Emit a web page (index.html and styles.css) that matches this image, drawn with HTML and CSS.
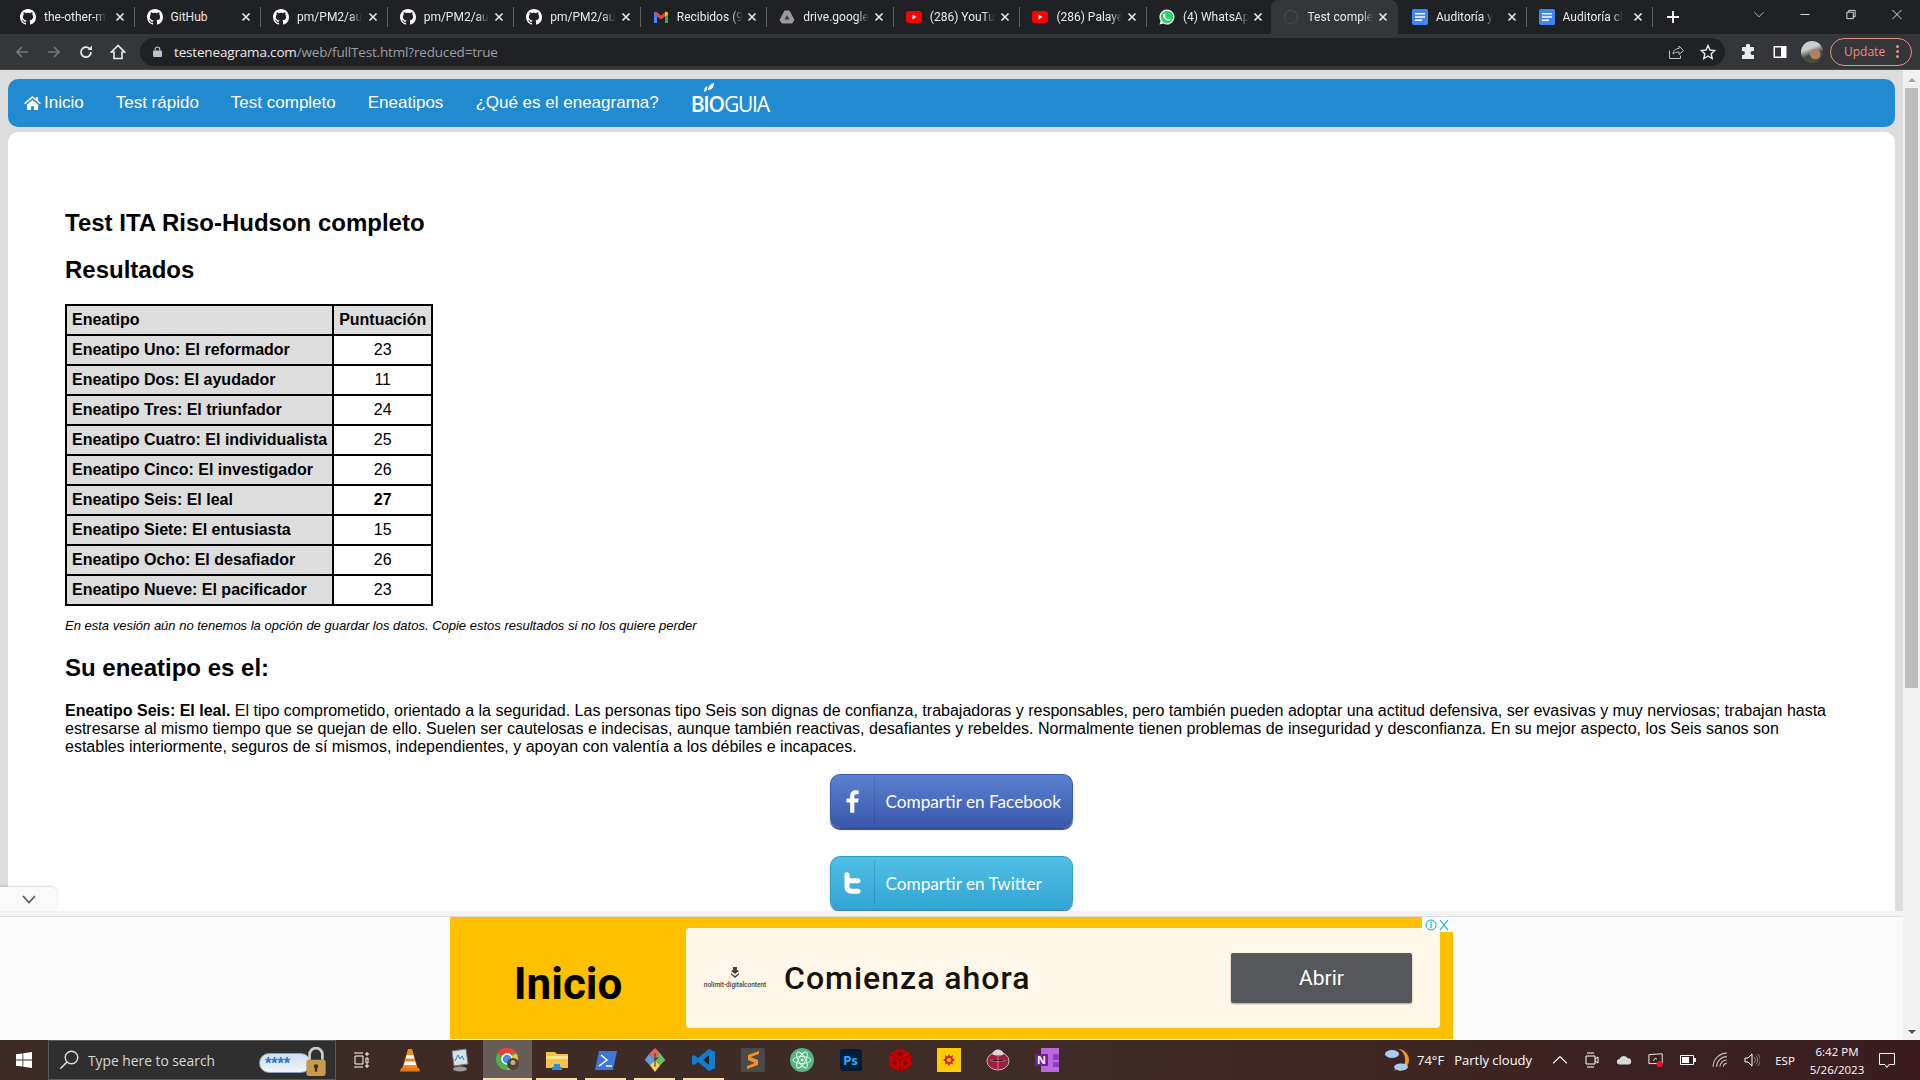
FILE: index.html
```html
<!DOCTYPE html>
<html lang="es">
<head>
<meta charset="utf-8">
<title>Test completo</title>
<link rel="stylesheet" href="styles.css">
</head>
<body>
<svg class="defs" width="0" height="0">
  <symbol id="gh" viewBox="0 0 16 16"><path fill="#fff" d="M8 0C3.58 0 0 3.58 0 8c0 3.54 2.29 6.53 5.47 7.59.4.07.55-.17.55-.38 0-.19-.01-.82-.01-1.49-2.01.37-2.53-.49-2.69-.94-.09-.23-.48-.94-.82-1.13-.28-.15-.68-.52-.01-.53.63-.01 1.08.58 1.23.82.72 1.21 1.87.87 2.33.66.07-.52.28-.87.51-1.07-1.78-.2-3.64-.89-3.64-3.95 0-.87.31-1.59.82-2.15-.08-.2-.36-1.02.08-2.12 0 0 .67-.21 2.2.82.64-.18 1.32-.27 2-.27.68 0 1.36.09 2 .27 1.53-1.04 2.2-.82 2.2-.82.44 1.1.16 1.92.08 2.12.51.56.82 1.27.82 2.15 0 3.07-1.87 3.75-3.65 3.95.29.25.54.73.54 1.48 0 1.07-.01 1.93-.01 2.2 0 .21.15.46.55.38A8.013 8.013 0 0016 8c0-4.42-3.58-8-8-8z"/></symbol>
  <symbol id="x" viewBox="0 0 10 10"><path d="M1.5 1.5l7 7M8.500 1.500l-7 7" stroke="#e8eaed" stroke-width="1.6" fill="none"/></symbol>
  <symbol id="yt" viewBox="0 0 16 16"><rect y="2" width="16" height="12" rx="3" fill="#f00"/><path d="M6.500 5.500l4 2.500-4 2.500z" fill="#fff"/></symbol>
  <symbol id="doc" viewBox="0 0 16 16"><rect width="16" height="16" rx="2" fill="#4285f4"/><path d="M3 4h10v1.600H3zM3 7.200h10v1.600H3zM3 10.400h7V12H3z" fill="#fff"/></symbol>
</svg>

<header class="tabstrip">
  <div class="tab"><svg class="fav"><use href="#gh"/></svg><span class="tab-label">the-other-m</span><svg class="tab-x"><use href="#x"/></svg></div>
  <div class="tab"><svg class="fav"><use href="#gh"/></svg><span class="tab-label tab-label-full">GitHub</span><svg class="tab-x"><use href="#x"/></svg></div>
  <div class="tab"><svg class="fav"><use href="#gh"/></svg><span class="tab-label">pm/PM2/au</span><svg class="tab-x"><use href="#x"/></svg></div>
  <div class="tab"><svg class="fav"><use href="#gh"/></svg><span class="tab-label">pm/PM2/au</span><svg class="tab-x"><use href="#x"/></svg></div>
  <div class="tab"><svg class="fav"><use href="#gh"/></svg><span class="tab-label">pm/PM2/au</span><svg class="tab-x"><use href="#x"/></svg></div>
  <div class="tab"><svg class="fav" viewBox="0 0 16 16"><path d="M1 3.500V14h3V7.500l4 3 4-3V14h3V3.500l-2-1-5 4-5-4z" fill="#ea4335"/><path d="M1 3.500V14h3V6z" fill="#4285f4"/><path d="M12 6v8h3V3.500z" fill="#34a853"/><path d="M12 2.500l3 1V6l-3 1.500z" fill="#fbbc04"/></svg><span class="tab-label">Recibidos (9</span><svg class="tab-x"><use href="#x"/></svg></div>
  <div class="tab"><svg class="fav" viewBox="0 0 16 16"><path d="M5.500 1.500h5L15.500 11l-2.500 3.500H3L.5 11z" fill="#9a9a9a"/><path d="M8 6l2.500 4.500h-5z" fill="#3a3b3e"/></svg><span class="tab-label">drive.google</span><svg class="tab-x"><use href="#x"/></svg></div>
  <div class="tab"><svg class="fav"><use href="#yt"/></svg><span class="tab-label">(286) YouTu</span><svg class="tab-x"><use href="#x"/></svg></div>
  <div class="tab"><svg class="fav"><use href="#yt"/></svg><span class="tab-label">(286) Palaye</span><svg class="tab-x"><use href="#x"/></svg></div>
  <div class="tab"><svg class="fav" viewBox="0 0 16 16"><path d="M8 .5a7.500 7.500 0 00-6.400 11.400L.5 15.500l3.700-1A7.500 7.500 0 108 .5z" fill="#fff"/><circle cx="8" cy="8" r="6.300" fill="#25d366"/><path d="M5.500 4.500c1 0 1 2 .6 2.500-.3.500.8 2.500 3 3.200.6-.7 1-.9 1.500-.6l1 .8c0 1.200-1.500 2-3 1.500C6 11 4 8.500 4 6.500c0-1 .7-2 1.500-2z" fill="#fff"/></svg><span class="tab-label">(4) WhatsAp</span><svg class="tab-x"><use href="#x"/></svg></div>
  <div class="tab tab-active"><svg class="fav" viewBox="0 0 16 16"><circle cx="8" cy="8" r="6.500" fill="none" stroke="#4a4b50" stroke-width="1.500" stroke-dasharray="2 1"/></svg><span class="tab-label">Test comple</span><svg class="tab-x"><use href="#x"/></svg></div>
  <div class="tab"><svg class="fav"><use href="#doc"/></svg><span class="tab-label">Auditoría y</span><svg class="tab-x"><use href="#x"/></svg></div>
  <div class="tab"><svg class="fav"><use href="#doc"/></svg><span class="tab-label">Auditoría cl</span><svg class="tab-x"><use href="#x"/></svg></div>
  <svg class="newtab" viewBox="0 0 12 12"><path d="M6 0v12M0 6h12" stroke="#fff" stroke-width="1.800"/></svg>
  <div class="winctl">
    <svg viewBox="0 0 12 12"><path d="M1 3.500l5 5 5-5" stroke="#bdc1c6" fill="none"/></svg>
    <svg viewBox="0 0 12 12"><path d="M1 6h10" stroke="#e8eaed"/></svg>
    <svg viewBox="0 0 12 12"><path d="M1.500 3.500h7v7h-7zM3.500 3.500v-2h7v7h-2" stroke="#e8eaed" fill="none"/></svg>
    <svg viewBox="0 0 12 12"><path d="M1 1l10 10M11 1L1 11" stroke="#e8eaed" fill="none"/></svg>
  </div>
</header>

<div class="toolbar">
  <svg class="tb-ic" viewBox="0 0 16 16"><path d="M14 8H3M8 3L3 8l5 5" stroke="#75777b" stroke-width="1.700" fill="none"/></svg>
  <svg class="tb-ic" viewBox="0 0 16 16"><path d="M2 8h11M8 3l5 5-5 5" stroke="#75777b" stroke-width="1.700" fill="none"/></svg>
  <svg class="tb-ic" viewBox="0 0 16 16"><path d="M13 8a5 5 0 11-1.500-3.500" stroke="#e8eaed" stroke-width="1.700" fill="none"/><path d="M14 1.500V6H9.500z" fill="#e8eaed"/></svg>
  <svg class="tb-ic tb-ic-last" viewBox="0 0 16 16"><path d="M8 1.500L1.500 8H4v6.500h8V8h2.500z" stroke="#e8eaed" stroke-width="1.600" fill="none"/></svg>
  <div class="omnibox">
    <svg class="lock" viewBox="0 0 10 12"><rect y="5" width="10" height="7" rx="1" fill="#bdc1c6"/><path d="M2.500 5V3.500a2.500 2.500 0 015 0V5" stroke="#bdc1c6" stroke-width="1.300" fill="none"/></svg>
    <span class="url"><span class="url-host">testeneagrama.com</span>/web/fullTest.html?reduced=true</span>
    <svg class="omni-ic" viewBox="0 0 16 16"><path d="M1.500 6.500v8h11v-3M5 10c0-3.500 3-5.500 6-5.500V2l4.500 4.500L11 10.500V8c-2.500 0-4.500.5-6 2z" stroke="#bdc1c6" fill="none"/></svg>
    <svg class="omni-ic omni-star" viewBox="0 0 16 16"><path d="M8 1.500l2 4.500 4.800.5-3.600 3.200 1 4.800L8 12l-4.200 2.500 1-4.800L1.200 6.500 6 6z" stroke="#e8eaed" stroke-width="1.400" fill="none"/></svg>
  </div>
  <div class="tb-right">
    <svg class="tb-r-ic" viewBox="0 0 16 16"><path d="M6 1.500a2 2 0 014 0V3h4v4h-1.500a2 2 0 000 4H14v4H2v-4h1a2 2 0 000-4H2V3h4z" fill="#e8eaed"/></svg>
    <svg class="tb-r-ic tb-r-side" viewBox="0 0 16 16"><path d="M1.500 2h13v12h-13z" fill="#fff"/><path d="M3 3.500h6v9H3z" fill="#35363a"/></svg>
    <span class="avatar"></span>
    <div class="update"><span>Update</span><span class="dots"><i></i><i></i><i></i></span></div>
  </div>
</div>

<div class="viewport">
  <main class="page">
    <nav class="nav">
      <a class="nav-item"><svg class="home" viewBox="0 0 18 15"><path d="M9 0L0 7.500l1 1.300L9 2.200l8 6.600 1-1.300-3-2.500V1h-2.500v2.300zM3 9.200V15h4.500v-4h3v4H15V9.200L9 4.200z" fill="#fff"/></svg> Inicio</a>
      <a class="nav-item">Test rápido</a>
      <a class="nav-item">Test completo</a>
      <a class="nav-item">Eneatipos</a>
      <a class="nav-item">¿Qué es el eneagrama?</a>
      <a class="nav-item brand"><svg class="leaves" viewBox="0 0 10 9"><path d="M0 9c0-3 1-5 3-6 1 2 0 5-3 6zM4 7c0-3 2-6 6-7 0 4-2 7-6 7z" fill="#fff"/></svg><b>BIO</b>GUIA</a>
    </nav>
    <section class="panel">
      <h1 class="title t1">Test ITA Riso-Hudson completo</h1>
      <h2 class="title t2">Resultados</h2>
      <table class="results">
        <tr><th>Eneatipo</th><th class="score-h">Puntuación</th></tr>
        <tr><th>Eneatipo Uno: El reformador</th><td>23</td></tr>
        <tr><th>Eneatipo Dos: El ayudador</th><td>11</td></tr>
        <tr><th>Eneatipo Tres: El triunfador</th><td>24</td></tr>
        <tr><th>Eneatipo Cuatro: El individualista</th><td>25</td></tr>
        <tr><th>Eneatipo Cinco: El investigador</th><td>26</td></tr>
        <tr><th>Eneatipo Seis: El leal</th><td class="top">27</td></tr>
        <tr><th>Eneatipo Siete: El entusiasta</th><td>15</td></tr>
        <tr><th>Eneatipo Ocho: El desafiador</th><td>26</td></tr>
        <tr><th>Eneatipo Nueve: El pacificador</th><td>23</td></tr>
      </table>
      <p class="note">En esta vesión aún no tenemos la opción de guardar los datos. Copie estos resultados si no los quiere perder</p>
      <h3 class="title t3">Su eneatipo es el:</h3>
      <p class="desc"><b>Eneatipo Seis: El leal.</b> El tipo comprometido, orientado a la seguridad. Las personas tipo Seis son dignas de confianza, trabajadoras y responsables, pero también pueden adoptar una actitud defensiva, ser evasivas y muy nerviosas; trabajan hasta estresarse al mismo tiempo que se quejan de ello. Suelen ser cautelosas e indecisas, aunque también reactivas, desafiantes y rebeldes. Normalmente tienen problemas de inseguridad y desconfianza. En su mejor aspecto, los Seis sanos son estables interiormente, seguros de sí mismos, independientes, y apoyan con valentía a los débiles e incapaces.</p>
      <div class="shares">
        <a class="share fb"><span class="share-ic"><svg viewBox="0 0 14 24"><path d="M9 24V13h4l.6-4.300H9V6.200C9 5 9.400 4.200 11 4.200h2.600V.3C13 .2 12 0 10.500 0 7 0 4.500 2.200 4.500 6v2.700H.5V13h4v11z" fill="#fff"/></svg></span><span class="share-t">Compartir en Facebook</span></a>
        <a class="share tw"><span class="share-ic"><svg viewBox="0 0 18 24"><path d="M3 3v13c0 3 2 5 5 5h7M3 9.500h12" stroke="#fff" stroke-width="5.500" stroke-linecap="round" fill="none"/></svg></span><span class="share-t">Compartir en Twitter</span></a>
      </div>
    </section>
    <aside class="anchor">
      <div class="anchor-tab"><svg viewBox="0 0 14 9"><path d="M1 1l6 6.500L13 1" stroke="#555" stroke-width="1.600" fill="none"/></svg></div>
      <div class="ad">
        <div class="ad-left">Inicio</div>
        <div class="ad-card">
          <div class="ad-logo"><svg viewBox="0 0 10 12"><path d="M3 0h4v3l2 1-4 3-4-3 2-1zM1 6l4 3 4-3v1.500L5 11 1 7.500z" fill="#444"/></svg><span>nolimit-digitalcontent</span></div>
          <div class="ad-head">Comienza ahora</div>
          <div class="ad-btn">Abrir</div>
        </div>
        <div class="ad-choice"><svg viewBox="0 0 12 12"><circle cx="6" cy="6" r="5" fill="none" stroke="#00aecd"/><path d="M6 5v4M6 3v1" stroke="#00aecd" stroke-width="1.200"/></svg><svg viewBox="0 0 12 12"><path d="M2 1l8 10M10 1L2 11" stroke="#00aecd" stroke-width="1.200"/></svg></div>
      </div>
    </aside>
  </main>
  <div class="scrollbar">
    <span class="arrow-up"></span>
    <span class="thumb"></span>
    <span class="arrow-down"></span>
  </div>
</div>

<footer class="taskbar">
  <div class="start"><svg viewBox="0 0 16 16"><path d="M0 2.300L6.500 1.400v6.200H0zM7.300 1.300L16 0v7.600H7.300zM0 8.400h6.500v6.200L0 13.700zM7.300 8.400H16V16l-8.700-1.300z" fill="#fff"/></svg></div>
  <div class="search">
    <svg class="search-ic" viewBox="0 0 16 16"><circle cx="10" cy="6" r="5" fill="none" stroke="#ddd" stroke-width="1.100"/><path d="M6.500 9.500L1 15" stroke="#ddd" stroke-width="1.200"/></svg>
    <span class="search-t">Type here to search</span>
    <span class="pw"><span>****</span></span>
    <svg class="padlock" viewBox="0 0 20 28"><path d="M4 12V7a6 6 0 0112 0v5" stroke="#c9ccd0" stroke-width="2.500" fill="none"/><rect x="1" y="12" width="18" height="15" rx="2" fill="#c99a4a"/><circle cx="10" cy="18" r="2" fill="#3a2a14"/><path d="M9 18h2v5H9z" fill="#3a2a14"/></svg>
  </div>
  <div class="apps">
    <div class="app app-task"><svg viewBox="0 0 16 16"><path d="M1 1h9M1 15h9M2 4h8v8H2zM13 1h2v2h-2zM13 6h2v5h-2zM13 13h2v2h-2z" stroke="#fff" fill="none"/></svg></div>
    <div class="app"><svg viewBox="0 0 20 24"><path d="M8 1h4l6 20H2z" fill="#f28a1d"/><path d="M6.800 7h6.400l1 3.500H5.800zM5 13.500h10l1 3.500H4z" fill="#fff"/><path d="M1 20h18l1 3.500H0z" fill="#e8780c"/></svg></div>
    <div class="app"><svg viewBox="0 0 24 24"><path d="M5 3l14-2 2 15-14 2z" fill="#d9dde0" stroke="#777"/><path d="M7 5l11-2 1 11-11 2z" fill="#cfe3f3"/><path d="M8 13l3-6 2 4 2-3 2 4" stroke="#3a77b5" fill="none"/><ellipse cx="13" cy="21" rx="7" ry="2.500" fill="#9a9a9a"/></svg></div>
    <div class="app app-chrome app-on"><svg viewBox="0 0 24 24"><circle cx="11" cy="11" r="11" fill="#4caf50"/><path d="M11 0a11 11 0 019.500 5.500H11a5.500 5.500 0 00-4.800 2.800L1.500 5A11 11 0 0111 0z" fill="#ea4335"/><path d="M20.500 5.500A11 11 0 0111 22l4.800-8.300A5.500 5.500 0 0016 8z" fill="#fbc02d"/><circle cx="11" cy="11" r="5" fill="#4a8fe7" stroke="#fff" stroke-width="1.500"/><circle cx="17" cy="16" r="6" fill="#4d423c"/><circle cx="17" cy="14.500" r="2.500" fill="#c9a98e"/></svg></div>
    <div class="app app-on"><svg viewBox="0 0 24 24"><path d="M1 4h9l2 2h11v14H1z" fill="#f5c34a"/><path d="M1 8h22v3H1z" fill="#fde08a"/><path d="M9 22v-6h6v6" fill="#2a8fd8"/><path d="M7 22h10v-3H7z" fill="#2a8fd8"/></svg></div>
    <div class="app app-on"><svg viewBox="0 0 24 24"><path d="M5 3h18l-4 19H1z" fill="#3b78d8"/><path d="M7 7l6 5-8 6M12 18h6" stroke="#fff" stroke-width="1.500" fill="none"/></svg></div>
    <div class="app app-on"><svg viewBox="0 0 24 28"><path d="M12 14L5 7l7-7 5 5z" fill="#e8655a"/><path d="M12 14L5 7l-5 7 6 6z" fill="#5a9ee8"/><path d="M12 14l5-9 7 9-6 6z" fill="#6cbf6a"/><path d="M6 20l6-6 6 6-6 8z" fill="#f4d35e"/><path d="M12 6v16M12 14l4-3" stroke="#333" stroke-width="1.200"/></svg></div>
    <div class="app app-on"><svg viewBox="0 0 24 24"><path d="M17 1l6 3v16l-6 3L6 14l-4 3-2-1V8l2-1 4 3z" fill="#0f7fd0"/><path d="M17 7l-6 5 6 5z" fill="#2b2421"/></svg></div>
    <div class="app"><svg viewBox="0 0 24 24"><rect width="24" height="24" rx="2" fill="#4a4a4a"/><path d="M18 3L7 7v5l7 3-8 3v3l11-4v-5L9.500 9 18 6z" fill="#f58f21"/></svg></div>
    <div class="app"><svg viewBox="0 0 24 24"><circle cx="12" cy="12" r="12" fill="#54b581"/><g fill="none" stroke="#dff3e6"><ellipse cx="12" cy="12" rx="9" ry="3.500"/><ellipse cx="12" cy="12" rx="9" ry="3.500" transform="rotate(60 12 12)"/><ellipse cx="12" cy="12" rx="9" ry="3.500" transform="rotate(120 12 12)"/></g><circle cx="12" cy="12" r="1.500" fill="#fff"/></svg></div>
    <div class="app"><span class="ps">Ps</span></div>
    <div class="app"><svg viewBox="0 0 24 24"><path d="M12 0l11 6v12l-11 6-11-6V6z" fill="#c40000"/><path d="M12 12L1 6M12 12l11-6M12 12v12" stroke="#7c0000"/><circle cx="12" cy="5.500" r="2" fill="#600"/><circle cx="6.500" cy="15" r="1.800" fill="#600"/><circle cx="17.500" cy="15" r="1.800" fill="#600"/></svg></div>
    <div class="app"><svg viewBox="0 0 24 24"><rect width="24" height="24" fill="#ffcc00"/><path d="M12 6l1.500 2.500L16 7l-.5 3 2.500 2-2.500 1.500.5 3-2.500-1L12 18l-1.500-2.500-2.500 1 .5-3L6 12l2.500-2L8 7l2.500 1.500z" fill="#d9263c"/><circle cx="12" cy="12" r="2" fill="#ffcc00"/></svg></div>
    <div class="app"><svg viewBox="0 0 24 24"><ellipse cx="12" cy="13" rx="11" ry="9" fill="#9f1e44" stroke="#bbb"/><path d="M6 6c2-6 10-6 12 0-3 2-9 2-12 0z" fill="#d9d9d9"/><path d="M12 8v14M4 12c4 2 12 2 16 0" stroke="#d86a88"/></svg></div>
    <div class="app"><svg viewBox="0 0 24 24"><path d="M6 0h18v24H6z" fill="#ba68e0"/><path d="M18 6h6v6h-6zM18 14h6v5h-6z" fill="#8e3fc0"/><rect y="6" width="13" height="12" fill="#7719aa"/><text x="6.500" y="16" class="one-n">N</text></svg></div>
  </div>
  <div class="tray">
    <div class="weather">
      <svg viewBox="0 0 26 26"><path d="M14 2a11 11 0 010 22A12 12 0 0014 2z" fill="#f08b1d"/><path d="M17 3a10 10 0 01-2 19l-6 1a11 11 0 008-20z" fill="#f5a623"/><ellipse cx="8" cy="7" rx="7" ry="4" fill="#a9ccef"/><ellipse cx="17" cy="20" rx="7" ry="3.500" fill="#a9ccef"/></svg>
      <span class="temp">74°F</span><span>Partly cloudy</span>
    </div>
    <div class="tray-ic"><svg viewBox="0 0 14 8"><path d="M1 7l6-6 6 6" stroke="#fff" fill="none"/></svg></div>
    <div class="tray-ic"><svg viewBox="0 0 14 16"><path d="M2 1h7M2 15h7M1 4h9v8H1zM10 7l3-2v6l-3-2" stroke="#fff" fill="none"/></svg></div>
    <div class="tray-ic"><svg viewBox="0 0 18 10"><path d="M4 10a3 3 0 010-6 5 5 0 019-1 3.500 3.500 0 011 7z" fill="#d8d8d8"/></svg></div>
    <div class="tray-ic"><svg viewBox="0 0 18 16"><path d="M1 2l15-1v11H1z" stroke="#fff" fill="none"/><path d="M6 9l2-3 2 1" stroke="#fff" fill="none"/><circle cx="13" cy="12.500" r="3.500" fill="#e81123"/></svg></div>
    <div class="tray-ic"><svg viewBox="0 0 16 10"><path d="M.5.500h13v9H.5z" stroke="#fff" fill="none"/><path d="M2 2h7v6H2z" fill="#fff"/><path d="M14 3h2v4h-2z" fill="#fff"/></svg></div>
    <div class="tray-ic"><svg viewBox="0 0 14 14"><path d="M1 13A12 12 0 0113 1M4 13a9 9 0 019-9M7 13a6 6 0 016-6M10 13a3 3 0 013-3" stroke="#bbb" fill="none"/></svg></div>
    <div class="tray-ic"><svg viewBox="0 0 16 14"><path d="M1 5h3l4-4v12L4 9H1z" stroke="#fff" fill="none"/><path d="M10 4a4 4 0 010 6M12 2.500a7 7 0 010 9M14 1a9 9 0 010 12" stroke="#888" fill="none"/></svg></div>
    <div class="lang">ESP</div>
    <div class="clock"><span>6:42 PM</span><span>5/26/2023</span></div>
    <div class="notif"><svg viewBox="0 0 16 15"><path d="M.5.500h15v11H10l-2 3-2-3H.5z" stroke="#fff" fill="none"/></svg></div>
  </div>
</footer>
</body>
</html>
```

FILE: styles.css
```css
* { box-sizing: border-box; }
html, body { margin: 0; height: 100%; overflow: hidden; }
body {
  display: flex;
  flex-direction: column;
  height: 1080px;
  font-family: "Liberation Sans", Arial, sans-serif;
  background: #ddd;
}
.defs { position: absolute; }

/* tab strip */
.tabstrip {
  height: 34px;
  flex: none;
  display: flex;
  align-items: stretch;
  padding-left: 8px;
  background: #202124;
  position: relative;
  font-family: Roboto, sans-serif;
}
.tab {
  width: 126.550px;
  flex: none;
  display: flex;
  align-items: center;
  padding: 0 8px 0 12px;
  position: relative;
  color: #e8eaed;
  font-size: 12px;
}
.tab::after {
  content: "";
  position: absolute;
  right: 0;
  top: 7px;
  height: 20px;
  width: 1px;
  background: #5f6368;
}
.tab-active { background: #35363a; border-radius: 8px 8px 0 0; margin-left: -2px; margin-right: 2px; }
.tab-active::after { display: none; }
.fav { width: 16px; height: 16px; flex: none; }
.tab-label {
  margin-left: 8px;
  max-width: 66px;
  white-space: nowrap;
  -webkit-mask-image: linear-gradient(90deg, #000 82%, transparent 100%);
  mask-image: linear-gradient(90deg, #000 82%, transparent 100%);
}
.tab-label-full { -webkit-mask-image: none; mask-image: none; }
.tab-x { width: 10px; height: 10px; margin-left: auto; margin-right: 2px; flex: none; }
.newtab { width: 12px; height: 12px; align-self: center; margin-left: 14px; flex: none; }
.winctl { margin-left: auto; display: flex; align-items: flex-start; }
.winctl svg { width: 46px; height: 11px; margin-top: 9px; flex: none; }

/* toolbar */
.toolbar {
  height: 36px;
  flex: none;
  display: flex;
  align-items: center;
  background: #35363a;
  padding-left: 14px;
  border-bottom: 1px solid #4a4b4f;
}
.tb-ic { width: 16px; height: 16px; margin-right: 16px; flex: none; }
.tb-ic-last { margin-right: 14px; }
.omnibox {
  width: 1585px;
  height: 28px;
  flex: none;
  display: flex;
  align-items: center;
  border-radius: 14px;
  background: #202124;
  padding-left: 13px;
  color: #9aa0a6;
}
.lock { width: 9px; height: 11px; flex: none; }
.url { margin-left: 12px; font: 13.500px "Open Sans", sans-serif; letter-spacing: -.17px; }
.url-host { color: #e8eaed; }
.omni-ic { width: 16px; height: 16px; margin-left: auto; flex: none; }
.omni-star { margin-left: 16px; margin-right: 9px; }
.tb-right { display: flex; align-items: center; margin-left: 15px; }
.tb-r-ic { width: 16px; height: 16px; margin-right: 16px; flex: none; }
.tb-r-side { margin-right: 13px; }
.avatar {
  width: 22px;
  height: 22px;
  border-radius: 50%;
  background: radial-gradient(circle at 65% 60%, #b0815f 0 25%, transparent 28%), linear-gradient(160deg, #c8cdd0 0 35%, #3f4a3c 60%, #5a4a3a);
  flex: none;
}
.update {
  width: 82px;
  height: 28px;
  margin-left: 7px;
  border: 1px solid #f28b82;
  border-radius: 14px;
  display: flex;
  align-items: center;
  padding-left: 13px;
  color: #f28b82;
  font: 12px "Open Sans", sans-serif;
}
.dots { display: flex; flex-direction: column; gap: 2px; margin-left: auto; margin-right: 12px; }
.dots i { width: 3px; height: 3px; border-radius: 50%; background: #f28b82; display: block; }

/* page */
.viewport { flex: 1; min-height: 0; display: flex; }
.page {
  flex: 1;
  min-width: 0;
  position: relative;
  overflow: hidden;
  padding: 9px 8px 0;
  background: #ddd;
}
.nav {
  height: 48px;
  display: flex;
  align-items: center;
  background: #228ad0;
  border-radius: 10px;
  color: #fff;
  font-size: 17px;
}
.nav-item { padding: 0 16px; white-space: nowrap; display: flex; align-items: center; gap: 3px; }
.home { width: 17px; height: 14px; }
.brand {
  display: block;
  position: relative;
  font: 400 21px "Open Sans", sans-serif;
  letter-spacing: -1.200px;
  margin-top: 2px;
}
.brand b { font-weight: 600; }
.leaves { position: absolute; width: 10px; height: 9px; left: 29px; top: -7px; }

.panel {
  margin-top: 5px;
  height: 900px;
  background: #fff;
  border-radius: 10px;
  padding: 77px 57px 0;
  color: #000;
}
.title { margin: 0; font-size: 24px; line-height: 28px; font-weight: 700; }
.t2 { margin-top: 19px; }
.t3 { margin-top: 20px; }
.results { border-collapse: collapse; margin-top: 20px; font-size: 16px; line-height: 18px; }
.results th, .results td { border: 2px solid #000; padding: 5px; }
.results th { background: #ddd; text-align: left; white-space: nowrap; }
.results .score-h { text-align: center; }
.results td { text-align: center; background: #fff; }
.results .top { font-weight: 700; }
.note { margin: 12px 0 0; font-size: 13px; font-style: italic; line-height: 16px; }
.desc { margin: 20px 0 0; font-size: 16px; line-height: 18px; }
.shares { display: flex; flex-direction: column; align-items: center; gap: 28px; margin-top: 18px; }
.share {
  width: 243px;
  height: 54px;
  margin-left: -1px;
  border-radius: 10px;
  display: flex;
  align-items: center;
  color: #fff;
  font: 17.200px Lato, sans-serif;
}
.fb { background: linear-gradient(#5a81d0, #3a58ac); border: 1px solid #3a5aa8; box-shadow: 0 2px 1px #2d4a90; }
.tw { background: linear-gradient(#50bfe8, #33a5d3); border: 1px solid #2f9cc8; box-shadow: 0 2px 1px #2a8ab5; }
.share-ic {
  width: 44px;
  height: 46px;
  flex: none;
  border-right: 1px solid rgba(0,0,0,.12);
  display: flex;
  align-items: center;
  justify-content: center;
}
.fb .share-ic svg { width: 13px; height: 23px; }
.tw .share-ic svg { width: 17px; height: 22px; }
.share-t { margin-left: 11px; white-space: nowrap; }

/* anchored ad */
.anchor {
  position: absolute;
  left: 0;
  right: 0;
  bottom: 0;
  height: 129px;
  background: #fafafa;
  border-top: 5px solid #f3f3f3;
  display: flex;
  justify-content: center;
  padding-top: 1px;
  box-shadow: inset 0 1px 0 #ddd;
}
.anchor-tab {
  position: absolute;
  left: 0;
  top: -29px;
  width: 57px;
  height: 24px;
  background: #fafafa;
  border-radius: 0 6px 0 0;
  box-shadow: 0 -1px 2px rgba(0,0,0,.15);
  display: flex;
  align-items: center;
  justify-content: center;
}
.anchor-tab svg { width: 14px; height: 9px; }
.ad {
  width: 1003px;
  height: 122px;
  background: #ffc000;
  display: flex;
  align-items: center;
  position: relative;
}
.ad-left {
  width: 236px;
  flex: none;
  text-align: center;
  font: 700 44px Roboto, sans-serif;
  color: #000;
  padding-top: 11px;
}
.ad-card {
  width: 754px;
  height: 100px;
  flex: none;
  background: #fff7e8;
  border-radius: 4px;
  display: flex;
  align-items: center;
}
.ad-logo {
  width: 62px;
  margin-left: 18px;
  flex: none;
  display: flex;
  flex-direction: column;
  align-items: center;
  gap: 2px;
  font: 500 6.500px Roboto, sans-serif;
  color: #444;
  white-space: nowrap;
}
.ad-logo svg { width: 10px; height: 12px; }
.ad-head { margin-left: 18px; font: 500 32px Roboto, sans-serif; letter-spacing: 1px; color: #17120a; white-space: nowrap; }
.ad-btn {
  width: 181px;
  height: 50px;
  margin-left: auto;
  margin-right: 28px;
  background: #55575b;
  border-radius: 2px;
  color: #fff;
  box-shadow: 0 1px 2px rgba(0,0,0,.35);
  display: flex;
  align-items: center;
  justify-content: center;
  font: 21px Roboto, sans-serif;
}
.ad-choice {
  position: absolute;
  right: 0;
  top: 0;
  width: 31px;
  height: 15px;
  background: #fff;
  display: flex;
  align-items: center;
  justify-content: space-around;
  padding: 0 2px;
}
.ad-choice svg { width: 12px; height: 12px; }

/* scrollbar */
.scrollbar {
  width: 17px;
  flex: none;
  background: #f1f1f1;
  display: flex;
  flex-direction: column;
  align-items: center;
  position: relative;
}
.thumb { width: 13px; height: 600px; background: #bdbdbd; margin-top: 6px; }
.arrow-up { margin-top: 8px; border: 4px solid transparent; border-top: 0; border-bottom: 4px solid #a3a3a3; }
.arrow-down { margin-top: auto; margin-bottom: 6px; border: 4px solid transparent; border-bottom: 0; border-top: 4px solid #505050; }

/* taskbar */
.taskbar {
  height: 40px;
  flex: none;
  display: flex;
  align-items: stretch;
  background: linear-gradient(90deg, #3d2a24 0%, #3f2c27 55%, #3a1c1f 100%);
  color: #fff;
  font-family: "Open Sans", sans-serif;
  font-size: 12px;
}
.start { width: 48px; flex: none; display: flex; align-items: center; justify-content: center; }
.start svg { width: 16px; height: 16px; }
.search {
  width: 288px;
  flex: none;
  display: flex;
  align-items: center;
  background: #2f2f2f;
  border: 1px solid #5a5a5a;
  padding-left: 10px;
  position: relative;
  color: #d8d8d8;
  font-size: 14px;
}
.search-ic { width: 20px; height: 20px; flex: none; }
.search-t { margin-left: 9px; white-space: nowrap; font-size: 13.800px; }
.pw {
  position: absolute;
  left: 210px;
  top: 15px;
  width: 52px;
  height: 20px;
  margin-top: -3px;
  background: linear-gradient(#cfe0f5, #eef4fb);
  border: 1px solid #8aa1bd;
  border-radius: 10px;
  color: #1f7ad1;
  font: 700 16px/20px "Liberation Sans", sans-serif;
  padding-left: 5px;
  overflow: hidden;
}
.padlock { position: absolute; left: 256px; top: 6px; width: 22px; height: 30px; }
.apps { display: flex; flex: none; }
.app {
  width: 49px;
  display: flex;
  align-items: center;
  justify-content: center;
  position: relative;
}
.app svg { width: 24px; height: 24px; }
.app-task svg { width: 16px; height: 16px; }
.app-on::after {
  content: "";
  position: absolute;
  left: 4px;
  right: 4px;
  bottom: 0;
  height: 2px;
  background: #f6dfa8;
}
.app-chrome { background: #675c57; }
.app-chrome::after { left: 0; right: 0; }
.ps {
  width: 22px;
  height: 22px;
  background: #001e36;
  border-radius: 3px;
  color: #31a8ff;
  font: 700 13px/22px "Open Sans", sans-serif;
  text-align: center;
}
.one-n { fill: #fff; font: 700 11px "Open Sans", sans-serif; text-anchor: middle; }
.tray { margin-left: auto; display: flex; align-items: stretch; padding-right: 18px; }
.weather { width: 158px; display: flex; align-items: center; font-size: 13px; white-space: nowrap; }
.weather svg { width: 26px; height: 26px; margin-left: -2px; }
.temp { margin: 0 10px 0 7px; }
.tray-ic { width: 32px; display: flex; align-items: center; justify-content: center; }
.tray-ic svg { width: 16px; height: 16px; }
.lang { width: 34px; display: flex; align-items: center; justify-content: center; font-size: 11.500px; }
.clock { width: 70px; display: flex; flex-direction: column; align-items: center; justify-content: center; gap: 3px; font-size: 11.500px; line-height: 15px; }
.notif { width: 30px; display: flex; align-items: center; justify-content: center; }
.notif svg { width: 16px; height: 15px; }
```
